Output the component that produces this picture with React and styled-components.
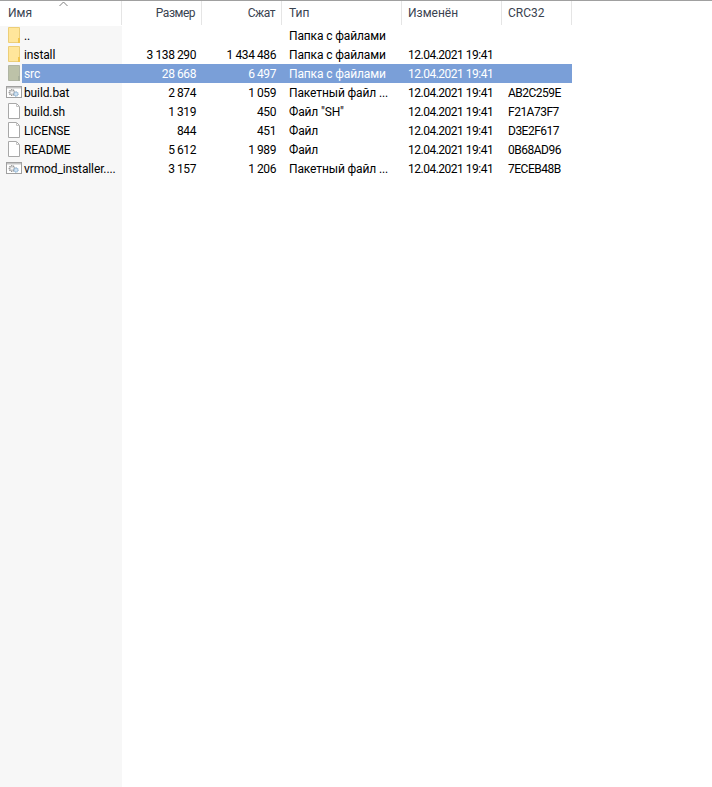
import React from "react";
import styled, { createGlobalStyle } from "styled-components";

const GlobalStyle = createGlobalStyle`
  html, body {
    margin: 0;
    padding: 0;
    height: 100%;
    background: #fff;
  }

  #root {
    height: 100%;
  }
`;

const COLUMNS = "122px 80px 80px 120px 100px 70px";

const Window = styled.div`
  height: 787px;
  width: 712px;
  overflow: hidden;
  display: flex;
  flex-direction: column;
  border-top: 1px solid #a0a0a0;
  box-sizing: border-box;
  font-family: Roboto, "Noto Sans", sans-serif;
  font-size: 12px;
  color: #000;
`;

const Header = styled.div`
  display: grid;
  grid-template-columns: ${COLUMNS};
  height: 25px;
  flex: none;
`;

const HeaderCell = styled.div`
  position: relative;
  display: flex;
  align-items: center;
  justify-content: ${(p) => (p.$right ? "flex-end" : "flex-start")};
  padding: 0 6px 0 ${(p) => p.$left || 6}px;
  border-right: 1px solid #e5e5e5;
  color: #3a4350;
  margin-bottom: 1px;
  letter-spacing: ${(p) => (p.$right ? "-0.5px" : "0")};
`;

const SortArrow = styled.svg`
  position: absolute;
  left: 58px;
  top: 0;
  width: 11px;
  height: 6px;
`;

const Body = styled.div`
  flex: 1;
  background: linear-gradient(90deg, #f7f7f7 122px, #fff 122px);
`;

const Row = styled.div`
  display: grid;
  grid-template-columns: ${COLUMNS};
  width: 572px;
  height: 19px;
  align-items: center;
  background: ${(p) =>
    p.$selected ? "linear-gradient(90deg, transparent 22px, #7a9fd8 22px)" : "none"};
  color: ${(p) => (p.$selected ? "#fff" : "#000")};
`;

const NameCell = styled.div`
  display: flex;
  align-items: center;
  gap: 2px;
  padding-left: 6px;
  white-space: nowrap;
  overflow: hidden;
  letter-spacing: -0.12px;
`;

const IconBox = styled.svg`
  width: 16px;
  height: 19px;
  flex: none;
`;

const NumCell = styled.div`
  text-align: right;
  padding-right: 6px;
  letter-spacing: -0.42px;
`;

const TextCell = styled.div`
  padding-left: ${(p) => p.$left || 6}px;
  white-space: nowrap;
  overflow: hidden;
  letter-spacing: ${(p) => p.$spacing || 0}px;
`;

const FolderIcon = ({ dim }) => (
  <IconBox viewBox="0 0 16 19">
    <path
      d="M2.5 1.5h11v15h-11z"
      fill={dim ? "#bdc2a8" : "#ffe69b"}
      stroke={dim ? "#b0b5a4" : "#ecce78"}
    />
    <path d="M12 12h2v5h-2z" fill={dim ? "#a9b09c" : "#f2c64f"} />
  </IconBox>
);

const FileIcon = () => (
  <IconBox viewBox="0 0 16 19">
    <path d="M2.5 1.5h8l3 3v12h-11z" fill="#fff" stroke="#a8a8a8" />
    <path d="M10.5 1.5v3h3" fill="none" stroke="#c4c4c4" />
  </IconBox>
);

const BatchIcon = () => (
  <IconBox viewBox="0 0 16 19">
    <rect x="0.5" y="3.5" width="15" height="11" fill="#fff" stroke="#a0a0a0" />
    <path d="M1 4h14v1.5H1z" fill="#c4c4c4" />
    <circle cx="6" cy="9.5" r="2.8" fill="#d4d4d4" stroke="#8e8e8e" strokeWidth="1.2" strokeDasharray="1.2 0.8" />
    <circle cx="6" cy="9.5" r="0.9" fill="#fff" />
    <circle cx="10" cy="11" r="2.3" fill="#b4cfe6" stroke="#86a8c6" strokeWidth="0.9" strokeDasharray="1 0.6" />
    <circle cx="10" cy="11" r="0.7" fill="#fff" />
  </IconBox>
);

const ICONS = {
  folder: <FolderIcon />,
  dim: <FolderIcon dim />,
  file: <FileIcon />,
  batch: <BatchIcon />,
};

const rows = [
  { icon: "folder", name: "..", type: "Папка с файлами" },
  { icon: "folder", name: "install", size: "3 138 290", packed: "1 434 486", type: "Папка с файлами", date: "12.04.2021 19:41" },
  { icon: "dim", name: "src", size: "28 668", packed: "6 497", type: "Папка с файлами", date: "12.04.2021 19:41", selected: true },
  { icon: "batch", name: "build.bat", size: "2 874", packed: "1 059", type: "Пакетный файл ...", date: "12.04.2021 19:41", crc: "AB2C259E" },
  { icon: "file", name: "build.sh", size: "1 319", packed: "450", type: 'Файл "SH"', date: "12.04.2021 19:41", crc: "F21A73F7" },
  { icon: "file", name: "LICENSE", size: "844", packed: "451", type: "Файл", date: "12.04.2021 19:41", crc: "D3E2F617" },
  { icon: "file", name: "README", size: "5 612", packed: "1 989", type: "Файл", date: "12.04.2021 19:41", crc: "0B68AD96" },
  { icon: "batch", name: "vrmod_installer....", size: "3 157", packed: "1 206", type: "Пакетный файл ...", date: "12.04.2021 19:41", crc: "7ECEB48B" },
];

const App = () => (
  <Window>
    <GlobalStyle />
    <Header>
      <HeaderCell $left={8}>
        Имя
        <SortArrow viewBox="0 0 11 6">
          <path d="M1.5 5L5.5 1L9.5 5" fill="none" stroke="#808080" />
        </SortArrow>
      </HeaderCell>
      <HeaderCell $right>Размер</HeaderCell>
      <HeaderCell $right>Сжат</HeaderCell>
      <HeaderCell $left={7}>Тип</HeaderCell>
      <HeaderCell>Изменён</HeaderCell>
      <HeaderCell>CRC32</HeaderCell>
    </Header>
    <Body>
      {rows.map((row) => (
        <Row key={row.name} $selected={row.selected}>
          <NameCell>
            {ICONS[row.icon]}
            {row.name}
          </NameCell>
          <NumCell>{row.size}</NumCell>
          <NumCell>{row.packed}</NumCell>
          <TextCell $left={7} $spacing={-0.13}>{row.type}</TextCell>
          <TextCell $spacing={-0.5}>{row.date}</TextCell>
          <TextCell $spacing={-0.5}>{row.crc}</TextCell>
        </Row>
      ))}
    </Body>
  </Window>
);

export default App;
